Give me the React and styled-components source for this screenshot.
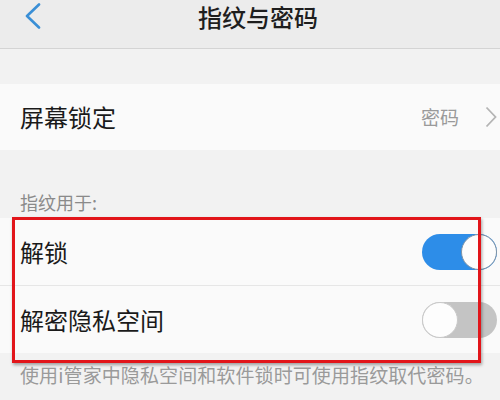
import React from 'react';
import styled, { createGlobalStyle } from 'styled-components';

const GlobalStyle = createGlobalStyle`
  html, body {
    margin: 0;
    padding: 0;
    background: #f2f2f2;
    font-family: "Noto Sans CJK SC", "Noto Sans", sans-serif;
  }
`;

const Page = styled.div`
  width: 500px;
  height: 400px;
  overflow: hidden;
  background: #f2f2f2;
`;

const Header = styled.div`
  height: 48px;
  border-bottom: 1px solid #d4d4d4;
  background: #ececec;
  display: flex;
  align-items: center;
  justify-content: center;
  position: relative;
`;

const Back = styled.div`
  position: absolute;
  left: 24px;
  top: 3px;
  width: 18px;
  height: 26px;
  display: flex;
`;

const Title = styled.div`
  font-size: 24px;
  font-weight: 500;
  line-height: 32px;
  color: #1e1e1e;
  margin-top: -14px;
  margin-left: 16px;
`;

const Spacer = styled.div`
  height: ${p => p.$h}px;
`;

const Row = styled.div`
  height: ${p => p.$h}px;
  background: #fafafa;
  display: flex;
  align-items: center;
  padding: 0 3px 0 20px;
  border-top: ${p => (p.$divider ? '1px solid #e6e6e6' : 'none')};
`;

const Label = styled.div`
  flex: 1;
  font-size: 24px;
  line-height: 30px;
  color: #1a1a1a;
`;

const Value = styled.div`
  font-size: 19px;
  line-height: 24px;
  color: #9a9a9a;
  margin-right: 26px;
`;

const SectionLabel = styled.div`
  height: 68px;
  box-sizing: border-box;
  padding: 40px 0 0 20px;
  font-size: 18px;
  line-height: 24px;
  color: #8a8a8a;
`;

const Group = styled.div`
  position: relative;
`;

const Highlight = styled.div`
  position: absolute;
  left: 12px;
  top: -1px;
  width: 469px;
  height: 146px;
  box-sizing: border-box;
  border: 3px solid #e2151a;
  box-shadow: 1px 2px 3px rgba(0, 0, 0, 0.35);
  pointer-events: none;
`;

const Track = styled.div`
  width: 75px;
  height: 36px;
  border-radius: 18px;
  background: ${p => (p.$on ? '#2d8de8' : '#c4c4c4')};
  display: flex;
  justify-content: ${p => (p.$on ? 'flex-end' : 'flex-start')};
`;

const Knob = styled.div`
  width: 36px;
  height: 36px;
  box-sizing: border-box;
  border-radius: 50%;
  background: #fdfdfd;
  border: 1px solid ${p => (p.$on ? '#7f93a6' : '#c9c9c9')};
`;

const Note = styled.div`
  padding: 10px 0 0 20px;
  font-size: 19px;
  line-height: 24px;
  letter-spacing: 0.1px;
  color: #9a9a9a;
  white-space: nowrap;
`;

const Toggle = ({ on }) => (
  <Track $on={on}>
    <Knob $on={on} />
  </Track>
);

const Chevron = () => (
  <svg width="12" height="22" viewBox="0 0 12 22">
    <path d="M1.5 1.5 L10.5 11 L1.5 20.5" fill="none" stroke="#b4b4b4" strokeWidth="1.8" />
  </svg>
);

export default function App() {
  return (
    <Page>
      <GlobalStyle />
      <Header>
        <Back>
          <svg width="18" height="26" viewBox="0 0 18 26">
            <path d="M15 1.5 L3 13 L15 24.5" fill="none" stroke="#3a8fd6" strokeWidth="2.6" strokeLinecap="round" strokeLinejoin="round" />
          </svg>
        </Back>
        <Title>指纹与密码</Title>
      </Header>
      <Spacer $h={35} />
      <Row $h={66}>
        <Label>屏幕锁定</Label>
        <Value>密码</Value>
        <Chevron />
      </Row>
      <SectionLabel>指纹用于:</SectionLabel>
      <Group>
        <Row $h={67}>
          <Label>解锁</Label>
          <Toggle on />
        </Row>
        <Row $h={67} $divider>
          <Label>解密隐私空间</Label>
          <Toggle on={false} />
        </Row>
        <Highlight />
      </Group>
      <Note>使用i管家中隐私空间和软件锁时可使用指纹取代密码。</Note>
    </Page>
  );
}
